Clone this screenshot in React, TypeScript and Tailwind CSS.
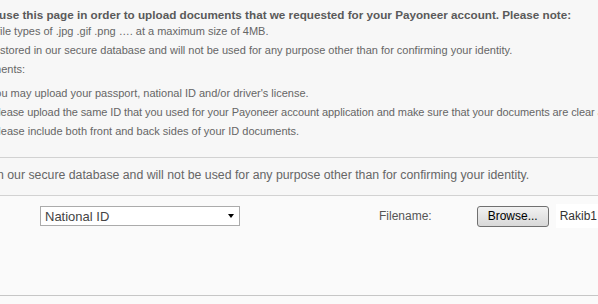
import React from 'react';

const font = { fontFamily: '"Liberation Sans", Arial, sans-serif' };

function InfoLine({ text, shift = 0 }: { text: string; shift?: number }) {
  return (
    <div className="whitespace-nowrap text-[11px] leading-[19px] text-[#666]" style={{ marginLeft: -shift }}>
      {text}
    </div>
  );
}

function FakeSelect({ value }: { value: string }) {
  return (
    <div className="flex h-[20px] w-[200px] items-center justify-between border border-[#ababab] bg-white pl-[4px] pr-[5px]">
      <span className="text-[13px] leading-none text-[#444]">{value}</span>
      {/* dropdown caret */}
      <span className="h-0 w-0 border-x-[3.5px] border-t-[4px] border-x-transparent border-t-black" />
    </div>
  );
}

export default function App() {
  return (
    <div className="h-[304px] w-[598px] overflow-hidden bg-[#f7f7f7]" style={font}>
      {/* Instructions */}
      <div className="pt-[8px]">
        <div className="ml-[-1px] whitespace-nowrap text-[11.7px] font-bold leading-[14px] text-[#5a5a5a]">
          use this page in order to upload documents that we requested for your Payoneer account. Please note:
        </div>
        <InfoLine text="file types of .jpg .gif .png …. at a maximum size of 4MB." shift={3} />
        <InfoLine text="stored in our secure database and will not be used for any purpose other than for confirming your identity." />
        <InfoLine text="ments:" shift={8} />
        <div className="mt-[5px]">
          <InfoLine text="You may upload your passport, national ID and/or driver's license." shift={11} />
          <div className="tracking-[-0.08px]">
            <InfoLine
              text="Please upload the same ID that you used for your Payoneer account application and make sure that your documents are clear and readable."
              shift={9}
            />
          </div>
          <InfoLine text="Please include both front and back sides of your ID documents." shift={9} />
        </div>
      </div>

      <div className="mt-[16px] border-t border-[#d2d2d2] pt-[8px]">
        <div className="ml-[-3px] whitespace-nowrap text-[12.3px] leading-[19px] text-[#666]">
          n our secure database and will not be used for any purpose other than for confirming your identity.
        </div>
      </div>

      {/* Upload row */}
      <div className="mt-[10px] h-[101px] border-t border-b border-t-[#d2d2d2] border-b-[#c6c6c6] bg-[#fafafa] pt-[8px]">
        <div className="flex items-center pl-[40px]">
          <FakeSelect value="National ID" />
          <span className="ml-[139px] text-[12px] text-[#555]">Filename:</span>
          <button className="ml-[45px] h-[21px] w-[72px] rounded-[3px] border border-[#707070] bg-gradient-to-b from-[#f2f2f2] to-[#d8d8d8] text-[12px] leading-none text-black">
            Browse...
          </button>
          <span className="ml-[7px] flex-1 whitespace-nowrap bg-white py-[3px] pl-[4px] text-[12px] text-[#333]">
            Rakib1
          </span>
        </div>
      </div>
      <div className="h-[8px] bg-[#fafafa]" />
    </div>
  );
}
